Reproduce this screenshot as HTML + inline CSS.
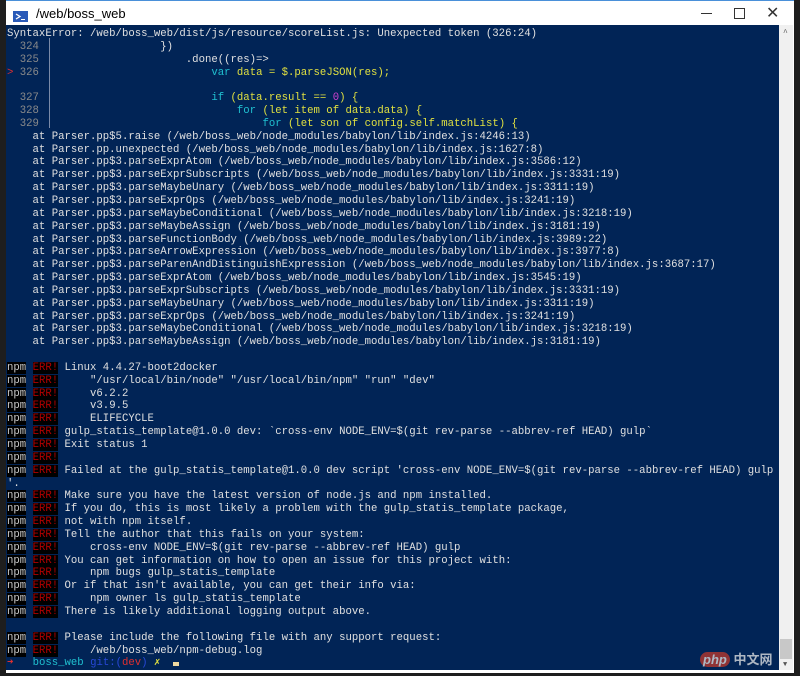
<!DOCTYPE html>
<html><head><meta charset="utf-8"><style>
*{margin:0;padding:0}
body{width:800px;height:676px;background:#1e1e1e;position:relative;overflow:hidden;font-family:"Liberation Mono",monospace}
#win{position:absolute;left:6px;top:0;width:788px;height:672px;background:#fff;border-top:1px solid #4a90d9}
#title{position:absolute;left:30px;top:5px;font:13px "Liberation Sans",sans-serif;color:#000}
#term{position:absolute;left:6px;top:25px;width:773px;height:645px;background:#012456;overflow:hidden}
#sb{position:absolute;left:779px;top:25px;width:14px;height:645px;background:#f0f0f0}
pre{position:absolute;left:1px;top:3px;font-size:10.65px;line-height:12.85px;color:#e0e0e0;white-space:pre;font-family:"Liberation Mono",monospace}
.n{color:#c8c8c8;background:#000}.e{color:#b00000;background:#000}
.g{color:#8a8a8a}.y{color:#e0e040}.c{color:#20c0d0}.m{color:#d040d0}.r{color:#e03030}.b{color:#2848d8}
</style></head><body>
<div id="win">
<svg style="position:absolute;left:7px;top:10px" width="15" height="11"><rect width="15" height="11" fill="#2a5ab8"/><path d="M3 3l4 2.5-4 2.5" stroke="#fff" fill="none" stroke-width="1.3"/><path d="M8 8.5h4" stroke="#fff"/></svg>
<div id="title">/web/boss_web</div>
<div style="position:absolute;left:695px;top:12px;width:11px;height:1px;background:#333"></div>
<div style="position:absolute;left:728px;top:7px;width:9px;height:9px;border:1px solid #333"></div>
<div style="position:absolute;left:760px;top:2px;font:16px 'Liberation Sans',sans-serif;color:#333">✕</div>
</div>
<div id="term">
<div style="position:absolute;left:43px;top:13px;width:1px;height:90px;background:#7a8aa8"></div>
<pre>SyntaxError: /web/boss_web/dist/js/resource/scoreList.js: Unexpected token (326:24)
<span class="g">  324  </span>                 })
<span class="g">  325  </span>                     .done((res)=>
<span class="r">&gt;</span><span class="g"> 326  </span>                         <span class="c">var</span><span class="y"> data = $.parseJSON(res);</span>

<span class="g">  327  </span>                         <span class="c">if</span><span class="y"> (data.result == </span><span class="m">0</span><span class="y">) {</span>
<span class="g">  328  </span>                             <span class="c">for</span><span class="y"> (let item of data.data) {</span>
<span class="g">  329  </span>                                 <span class="c">for</span><span class="y"> (let son of config.self.matchList) {</span>
    at Parser.pp$5.raise (/web/boss_web/node_modules/babylon/lib/index.js:4246:13)
    at Parser.pp.unexpected (/web/boss_web/node_modules/babylon/lib/index.js:1627:8)
    at Parser.pp$3.parseExprAtom (/web/boss_web/node_modules/babylon/lib/index.js:3586:12)
    at Parser.pp$3.parseExprSubscripts (/web/boss_web/node_modules/babylon/lib/index.js:3331:19)
    at Parser.pp$3.parseMaybeUnary (/web/boss_web/node_modules/babylon/lib/index.js:3311:19)
    at Parser.pp$3.parseExprOps (/web/boss_web/node_modules/babylon/lib/index.js:3241:19)
    at Parser.pp$3.parseMaybeConditional (/web/boss_web/node_modules/babylon/lib/index.js:3218:19)
    at Parser.pp$3.parseMaybeAssign (/web/boss_web/node_modules/babylon/lib/index.js:3181:19)
    at Parser.pp$3.parseFunctionBody (/web/boss_web/node_modules/babylon/lib/index.js:3989:22)
    at Parser.pp$3.parseArrowExpression (/web/boss_web/node_modules/babylon/lib/index.js:3977:8)
    at Parser.pp$3.parseParenAndDistinguishExpression (/web/boss_web/node_modules/babylon/lib/index.js:3687:17)
    at Parser.pp$3.parseExprAtom (/web/boss_web/node_modules/babylon/lib/index.js:3545:19)
    at Parser.pp$3.parseExprSubscripts (/web/boss_web/node_modules/babylon/lib/index.js:3331:19)
    at Parser.pp$3.parseMaybeUnary (/web/boss_web/node_modules/babylon/lib/index.js:3311:19)
    at Parser.pp$3.parseExprOps (/web/boss_web/node_modules/babylon/lib/index.js:3241:19)
    at Parser.pp$3.parseMaybeConditional (/web/boss_web/node_modules/babylon/lib/index.js:3218:19)
    at Parser.pp$3.parseMaybeAssign (/web/boss_web/node_modules/babylon/lib/index.js:3181:19)

<span class="n">npm</span> <span class="e">ERR!</span> Linux 4.4.27-boot2docker
<span class="n">npm</span> <span class="e">ERR!</span>     "/usr/local/bin/node" "/usr/local/bin/npm" "run" "dev"
<span class="n">npm</span> <span class="e">ERR!</span>     v6.2.2
<span class="n">npm</span> <span class="e">ERR!</span>     v3.9.5
<span class="n">npm</span> <span class="e">ERR!</span>     ELIFECYCLE
<span class="n">npm</span> <span class="e">ERR!</span> gulp_statis_template@1.0.0 dev: `cross-env NODE_ENV=$(git rev-parse --abbrev-ref HEAD) gulp`
<span class="n">npm</span> <span class="e">ERR!</span> Exit status 1
<span class="n">npm</span> <span class="e">ERR!</span>
<span class="n">npm</span> <span class="e">ERR!</span> Failed at the gulp_statis_template@1.0.0 dev script 'cross-env NODE_ENV=$(git rev-parse --abbrev-ref HEAD) gulp
'.
<span class="n">npm</span> <span class="e">ERR!</span> Make sure you have the latest version of node.js and npm installed.
<span class="n">npm</span> <span class="e">ERR!</span> If you do, this is most likely a problem with the gulp_statis_template package,
<span class="n">npm</span> <span class="e">ERR!</span> not with npm itself.
<span class="n">npm</span> <span class="e">ERR!</span> Tell the author that this fails on your system:
<span class="n">npm</span> <span class="e">ERR!</span>     cross-env NODE_ENV=$(git rev-parse --abbrev-ref HEAD) gulp
<span class="n">npm</span> <span class="e">ERR!</span> You can get information on how to open an issue for this project with:
<span class="n">npm</span> <span class="e">ERR!</span>     npm bugs gulp_statis_template
<span class="n">npm</span> <span class="e">ERR!</span> Or if that isn't available, you can get their info via:
<span class="n">npm</span> <span class="e">ERR!</span>     npm owner ls gulp_statis_template
<span class="n">npm</span> <span class="e">ERR!</span> There is likely additional logging output above.

<span class="n">npm</span> <span class="e">ERR!</span> Please include the following file with any support request:
<span class="n">npm</span> <span class="e">ERR!</span>     /web/boss_web/npm-debug.log
<span class="r">➜</span>   <span class="c">boss_web</span> <span class="b">git:(</span><span class="r">dev</span><span class="b">)</span> <span class="y">✗</span>  <span style="display:inline-block;width:6px;height:4px;background:#eed8a0;vertical-align:-1px"></span></pre>
<div style="position:absolute;left:694px;top:624px;font:bold 13px 'Liberation Sans','Noto Sans CJK SC',sans-serif;color:#e8e8e8;opacity:.75"><span style="background:#c0392b;border-radius:9px;padding:0 3px;font-style:italic">php</span> 中文网</div>
</div>
<div id="sb">
<div style="position:absolute;left:4px;top:4px;font-size:8px;color:#555">^</div>
<div style="position:absolute;left:1px;top:614px;width:12px;height:20px;background:#c8c8c8"></div>
<div style="position:absolute;left:4px;top:636px;font-size:7px;color:#555">▼</div>
</div>
</body></html>
